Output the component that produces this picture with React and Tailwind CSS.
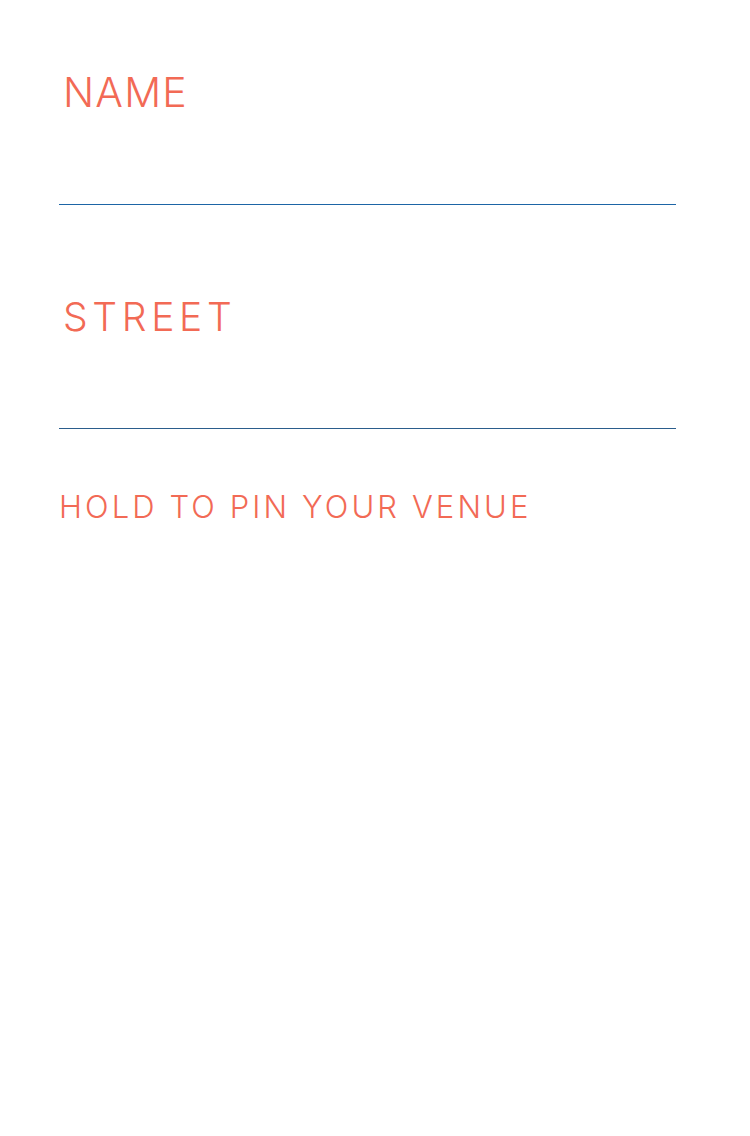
export default function App() {
  return (
    <div className="min-h-[1136px] w-[750px] bg-white font-['Inter','Liberation_Sans',sans-serif] text-[#f26a55]">
      <div className="pl-[59px] pr-[74px] pt-[72px]">
        <div className="pl-[4px] text-[41px] font-light uppercase leading-[40px] tracking-[0.03em]">Name</div>
        <div className="mt-[92px] h-px bg-[#1d65a6]" />
        <div className="mt-[92px] pl-[4px] text-[39px] font-light uppercase leading-[40px] tracking-[0.12em]">Street</div>
        <div className="mt-[91px] h-px bg-[#2b5d8c]" />
        <div className="mt-[62px] text-[31px] font-light uppercase leading-[32px] tracking-[0.1em]">Hold to pin your venue</div>
      </div>
    </div>
  );
}
